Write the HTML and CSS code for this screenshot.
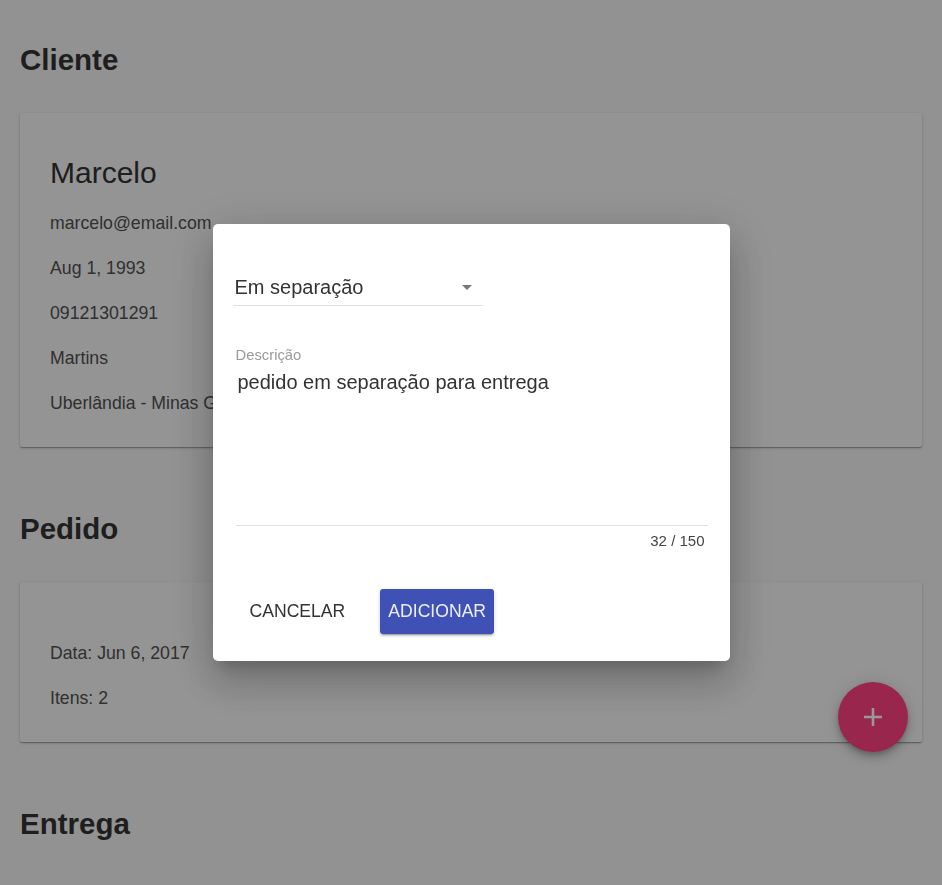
FILE: index.html
```html
<!DOCTYPE html>
<html lang="pt-BR">
<head>
<meta charset="utf-8">
<title>Pedido</title>
<link rel="stylesheet" href="styles.css">
</head>
<body>
<main class="page">
  <section class="section">
    <h2 class="section-title">Cliente</h2>
    <div class="card card-client">
      <div class="client-name">Marcelo</div>
      <div class="line">marcelo@email.com</div>
      <div class="line">Aug 1, 1993</div>
      <div class="line">09121301291</div>
      <div class="line">Martins</div>
      <div class="line">Uberlândia - Minas Gerais</div>
    </div>
  </section>
  <section class="section">
    <h2 class="section-title">Pedido</h2>
    <div class="card card-order">
      <div class="line">Data: Jun 6, 2017</div>
      <div class="line">Itens: 2</div>
      <button class="fab" aria-label="Adicionar">
        <svg width="22" height="22" viewBox="0 0 22 22"><path d="M11 2v18M2 11h18" stroke="#fff" stroke-width="2.6" fill="none"/></svg>
      </button>
    </div>
  </section>
  <section class="section">
    <h2 class="section-title">Entrega</h2>
  </section>
</main>

<div class="backdrop">
  <div class="dialog" role="dialog">
    <div class="select">
      <span class="select-value">Em separação</span>
      <span class="select-arrow"></span>
    </div>
    <div class="field">
      <label class="field-label" for="desc">Descrição</label>
      <textarea id="desc" class="field-input">pedido em separação para entrega</textarea>
      <div class="field-counter">32 / 150</div>
    </div>
    <div class="actions">
      <button class="btn btn-flat">CANCELAR</button>
      <button class="btn btn-raised">ADICIONAR</button>
    </div>
  </div>
</div>
</body>
</html>
```
FILE: styles.css
```css
html, body {
  margin: 0;
  padding: 0;
  overflow: hidden;
  height: 100%;
}
body {
  background: #f3f3f3;
  font-family: "Liberation Sans", Arial, sans-serif;
  color: #333;
}
.page {
  padding: 0 20px;
}
.section-title {
  margin: 64px 0 35px;
  font-size: 29.5px;
  line-height: 36px;
  font-weight: 700;
  color: #333;
}
.section:first-child .section-title {
  margin-top: 42px;
}
.card {
  position: relative;
  background: #f7f7f7;
  border-radius: 2px;
  box-shadow: 0 1px 3px rgba(0,0,0,.2), 0 1px 1px rgba(0,0,0,.14), 0 2px 1px -1px rgba(0,0,0,.12);
  padding: 37px 30px 21px;
}
.card-order {
  padding-top: 49px;
  padding-bottom: 21px;
}
.client-name {
  font-size: 30px;
  line-height: 45px;
  margin-bottom: 6px;
  color: #333;
}
.line {
  font-size: 17.7px;
  line-height: 45px;
  color: #505050;
}
.fab {
  position: absolute;
  right: 14px;
  bottom: -10px;
  width: 70px;
  height: 70px;
  border-radius: 50%;
  border: none;
  background: #ff4081;
  box-shadow: 0 3px 5px -1px rgba(0,0,0,.2), 0 6px 10px 0 rgba(0,0,0,.14), 0 1px 18px 0 rgba(0,0,0,.12);
  display: flex;
  align-items: center;
  justify-content: center;
  padding: 0;
}
.backdrop {
  position: fixed;
  inset: 0;
  background: rgba(0,0,0,.4);
  display: flex;
  align-items: center;
  justify-content: center;
}
.dialog {
  width: 517px;
  box-sizing: border-box;
  background: #fff;
  border-radius: 5px;
  padding: 51px 22px 27px 20px;
  box-shadow: 0 11px 15px -7px rgba(0,0,0,.2), 0 24px 38px 3px rgba(0,0,0,.14), 0 9px 46px 8px rgba(0,0,0,.12);
}
.select {
  width: 250px;
  box-sizing: border-box;
  display: flex;
  align-items: center;
  padding: 0 0 6px 2px;
  border-bottom: 1px solid #e0e0e0;
}
.select-value {
  flex: 1;
  font-size: 20px;
  line-height: 24px;
  color: #333;
}
.select-arrow {
  width: 0;
  height: 0;
  border-left: 5px solid transparent;
  border-right: 5px solid transparent;
  border-top: 5px solid #777;
  margin-right: 11px;
}
.field {
  margin: 40px 0 0 3px;
  width: 472px;
  display: flex;
  flex-direction: column;
}
.field-label {
  font-size: 14.8px;
  line-height: 18px;
  color: #9a9a9a;
}
.field-input {
  margin-top: 6px;
  height: 156px;
  box-sizing: border-box;
  border: none;
  border-bottom: 1px solid #e0e0e0;
  padding: 0 2px;
  resize: none;
  outline: none;
  font-family: "Liberation Sans", Arial, sans-serif;
  font-size: 20px;
  line-height: 24px;
  color: #333;
  overflow: hidden;
  background: transparent;
}
.field-counter {
  margin-top: 6px;
  text-align: right;
  padding-right: 3px;
  font-size: 15px;
  line-height: 18px;
  color: #444;
}
.actions {
  margin-top: 39px;
  display: flex;
  align-items: center;
  gap: 21px;
  padding-left: 3px;
}
.btn {
  font-family: "Liberation Sans", Arial, sans-serif;
  font-size: 17.6px;
  height: 45px;
  border: none;
  border-radius: 3px;
  background: transparent;
  padding: 0 14px;
  color: #333;
}
.btn-raised {
  background: #3f51b5;
  color: #eceef8;
  padding: 0 8px;
  box-shadow: 0 3px 1px -2px rgba(0,0,0,.2), 0 2px 2px 0 rgba(0,0,0,.14), 0 1px 5px 0 rgba(0,0,0,.12);
}
```
